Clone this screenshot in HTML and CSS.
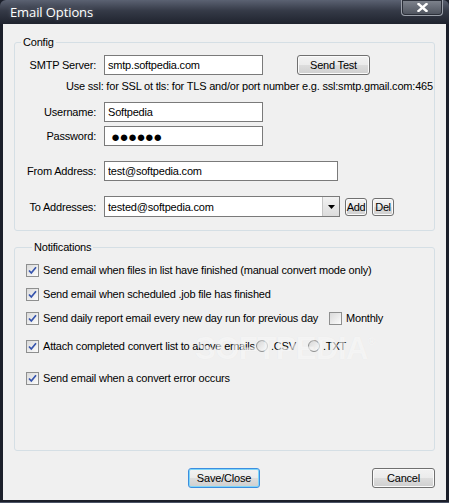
FILE: index.html
```html
<!DOCTYPE html>
<html lang="en">
<head>
  <meta charset="UTF-8">
  <title>Email Options</title>
  <link rel="stylesheet" href="styles.css">
</head>
<body>
  <div class="window">
    <div class="titlebar">
      <span class="title">Email Options</span>
      <button class="close" title="Close">
        <svg width="11" height="9" viewBox="0 0 11 9"><path d="M1.5 1 L9.5 8 M9.5 1 L1.5 8" stroke="#fff" stroke-width="2.4" stroke-linecap="square"/></svg>
      </button>
    </div>

    <div class="client">
      <fieldset class="group config">
        <legend>Config</legend>
        <div class="row">
          <label>SMTP Server:</label>
          <input class="field short" type="text" value="smtp.softpedia.com">
          <button class="btn send-test">Send Test</button>
        </div>
        <div class="hint">Use ssl: for SSL ot tls: for TLS and/or port number e.g. ssl:smtp.gmail.com:465</div>
        <div class="row">
          <label>Username:</label>
          <input class="field short" type="text" value="Softpedia">
        </div>
        <div class="row tight">
          <label>Password:</label>
          <input class="field short pass" type="text" value="●●●●●●">
        </div>
        <div class="row spaced">
          <label>From Address:</label>
          <input class="field long" type="text" value="test@softpedia.com">
        </div>
        <div class="row spaced combo-row">
          <label>To Addresses:</label>
          <div class="combo">
            <span class="combo-text">tested@softpedia.com</span>
            <span class="combo-arrow">
              <svg width="7" height="4" viewBox="0 0 7 4"><path d="M0 0 H7 L3.5 4 Z" fill="#000"/></svg>
            </span>
          </div>
          <button class="btn small">Add</button>
          <button class="btn small">Del</button>
        </div>
      </fieldset>

      <fieldset class="group notify">
        <legend>Notifications</legend>
        <div class="opt">
          <span class="check"><svg width="11" height="11" viewBox="0 0 11 11"><path d="M2 5.5 L4.3 8 L9 2.3" stroke="#3553ad" stroke-width="1.7" fill="none"/></svg></span>
          <span>Send email when files in list have finished (manual convert mode only)</span>
        </div>
        <div class="opt">
          <span class="check"><svg width="11" height="11" viewBox="0 0 11 11"><path d="M2 5.5 L4.3 8 L9 2.3" stroke="#3553ad" stroke-width="1.7" fill="none"/></svg></span>
          <span>Send email when scheduled .job file has finished</span>
        </div>
        <div class="opt">
          <span class="check"><svg width="11" height="11" viewBox="0 0 11 11"><path d="M2 5.5 L4.3 8 L9 2.3" stroke="#3553ad" stroke-width="1.7" fill="none"/></svg></span>
          <span class="daily">Send daily report email every new day run for previous day</span>
          <span class="check"></span>
          <span>Monthly</span>
        </div>
        <div class="opt more">
          <span class="check"><svg width="11" height="11" viewBox="0 0 11 11"><path d="M2 5.5 L4.3 8 L9 2.3" stroke="#3553ad" stroke-width="1.7" fill="none"/></svg></span>
          <span class="attach">Attach completed convert list to above emails</span>
          <span class="radio"></span>
          <span class="radio-label">.CSV</span>
          <span class="radio"></span>
          <span>.TXT</span>
        </div>
        <div class="opt most">
          <span class="check"><svg width="11" height="11" viewBox="0 0 11 11"><path d="M2 5.5 L4.3 8 L9 2.3" stroke="#3553ad" stroke-width="1.7" fill="none"/></svg></span>
          <span>Send email when a convert error occurs</span>
        </div>
        <div class="watermark">SOFTPEDIA<sup>®</sup></div>
      </fieldset>

      <div class="actions">
        <button class="btn main default">Save/Close</button>
        <button class="btn cancel">Cancel</button>
      </div>
    </div>
  </div>
</body>
</html>
```

FILE: styles.css
```css
body {
  margin: 0;
  font-family: "Liberation Sans", Arial, sans-serif;
  font-size: 11px;
  letter-spacing: -0.2px;
  color: #000;
  background: #1b1f2a;
}
.window {
  width: 449px;
  height: 503px;
  display: flex;
  flex-direction: column;
  background: #1b1f2a;
  border-bottom: 1px solid #4b5366;
  box-sizing: border-box;
}
.titlebar {
  height: 24px;
  flex: none;
  display: flex;
  justify-content: space-between;
  align-items: flex-start;
  background: linear-gradient(#5b6272, #353a47 45%, #1f232e);
  border-radius: 6px 6px 0 0;
}
.title {
  margin: 3px 0 0 10px;
  font-family: "Open Sans", sans-serif;
  font-size: 13px;
  letter-spacing: -0.1px;
  color: #fff;
  text-shadow: 0 0 4px rgba(255, 255, 255, 0.25);
}
.close {
  width: 42px;
  height: 16px;
  margin-right: 6px;
  padding: 0;
  border: 1px solid #9ba0aa;
  border-top: none;
  border-radius: 0 0 4px 4px;
  background: linear-gradient(#80858f, #4d525d);
  box-shadow: inset 0 0 0 1px #2b2f39;
  display: flex;
  align-items: center;
  justify-content: center;
}
.client {
  flex: 1;
  margin: 0 3px 2px;
  background: #f0f0f0;
  display: flex;
  flex-direction: column;
}
.group {
  margin: 11px 11px 0;
  padding: 6px 0 13px;
  border: 1px solid #d5dfe5;
  border-radius: 3px;
  min-width: 0;
  position: relative;
}
.group legend {
  margin-left: 6px;
  padding: 0 2px;
  line-height: 14px;
}
.notify {
  margin-top: 9px;
  padding: 8px 0 64px 11px;
}
.row {
  display: flex;
  align-items: center;
  height: 20px;
}
.row label {
  width: 81px;
  flex: none;
  margin-right: 8px;
  text-align: right;
}
.row.tight {
  margin-top: 4px;
}
.row.spaced {
  margin-top: 15px;
}
.combo-row {
  height: 21px;
}
.field {
  height: 20px;
  box-sizing: border-box;
  border: 1px solid #7a7a7a;
  padding: 0 3px;
  background: #fff;
  font: inherit;
  letter-spacing: inherit;
  color: #000;
}
.field.short {
  width: 159px;
}
.field.long {
  width: 234px;
}
.field.pass {
  padding-left: 6px;
  font-size: 15px;
  letter-spacing: -0.6px;
}
.hint {
  margin: 4px 0 9px 51px;
  line-height: 14px;
}
.combo {
  width: 236px;
  height: 21px;
  box-sizing: border-box;
  border: 1px solid #7a7a7a;
  background: #fff;
  display: flex;
  align-items: center;
}
.combo-text {
  flex: 1;
  padding-left: 3px;
}
.combo-arrow {
  width: 16px;
  height: 19px;
  border-left: 1px solid #c5c5c5;
  background: linear-gradient(#f2f2f2, #dcdcdc);
  display: flex;
  align-items: center;
  justify-content: center;
}
.btn {
  height: 20px;
  padding: 0;
  border: 1px solid #707070;
  border-radius: 3px;
  background: linear-gradient(#f2f2f2, #ebebeb 50%, #dddddd 50%, #cfcfcf);
  box-shadow: inset 0 0 0 1px #fbfbfb;
  font: inherit;
  letter-spacing: inherit;
  color: #000;
}
.send-test {
  width: 73px;
  margin-left: 34px;
}
.btn.small {
  width: 22px;
  height: 18px;
  margin-left: 5px;
  letter-spacing: -0.4px;
}
.opt {
  display: flex;
  align-items: center;
  height: 16px;
  margin-top: 8px;
}
.opt:first-of-type {
  margin-top: 0;
}
.opt.more {
  margin-top: 12px;
}
.opt.most {
  margin-top: 16px;
}
.check {
  width: 13px;
  height: 13px;
  flex: none;
  box-sizing: border-box;
  margin-right: 4px;
  border: 1px solid #8e8f8f;
  background: linear-gradient(135deg, #dadada, #fcfcfc);
  display: flex;
  align-items: center;
  justify-content: center;
}
.daily {
  width: 286px;
  flex: none;
}
.attach {
  width: 213px;
  flex: none;
}
.radio {
  width: 12px;
  height: 12px;
  flex: none;
  box-sizing: border-box;
  margin-right: 3px;
  border: 1px solid #8e8f8f;
  border-radius: 50%;
  background: linear-gradient(135deg, #d8d8d8, #fbfbfb);
}
.radio-label {
  width: 37px;
  flex: none;
}
.watermark {
  position: absolute;
  left: 180px;
  top: 77px;
  font-size: 31px;
  font-weight: bold;
  letter-spacing: -0.5px;
  color: rgba(255, 255, 255, 0.6);
  text-shadow: 0 0 1px rgba(0, 0, 0, 0.05);
  pointer-events: none;
}
.watermark sup {
  font-size: 10px;
  vertical-align: 14px;
}
.actions {
  display: flex;
  margin-top: 17px;
}
.btn.main {
  width: 72px;
  margin-left: 185px;
}
.btn.default {
  border-color: #3c8ee0;
  box-shadow: inset 0 0 0 1px #7fd6f8;
}
.btn.cancel {
  width: 63px;
  margin-left: auto;
  margin-right: 11px;
}
```
